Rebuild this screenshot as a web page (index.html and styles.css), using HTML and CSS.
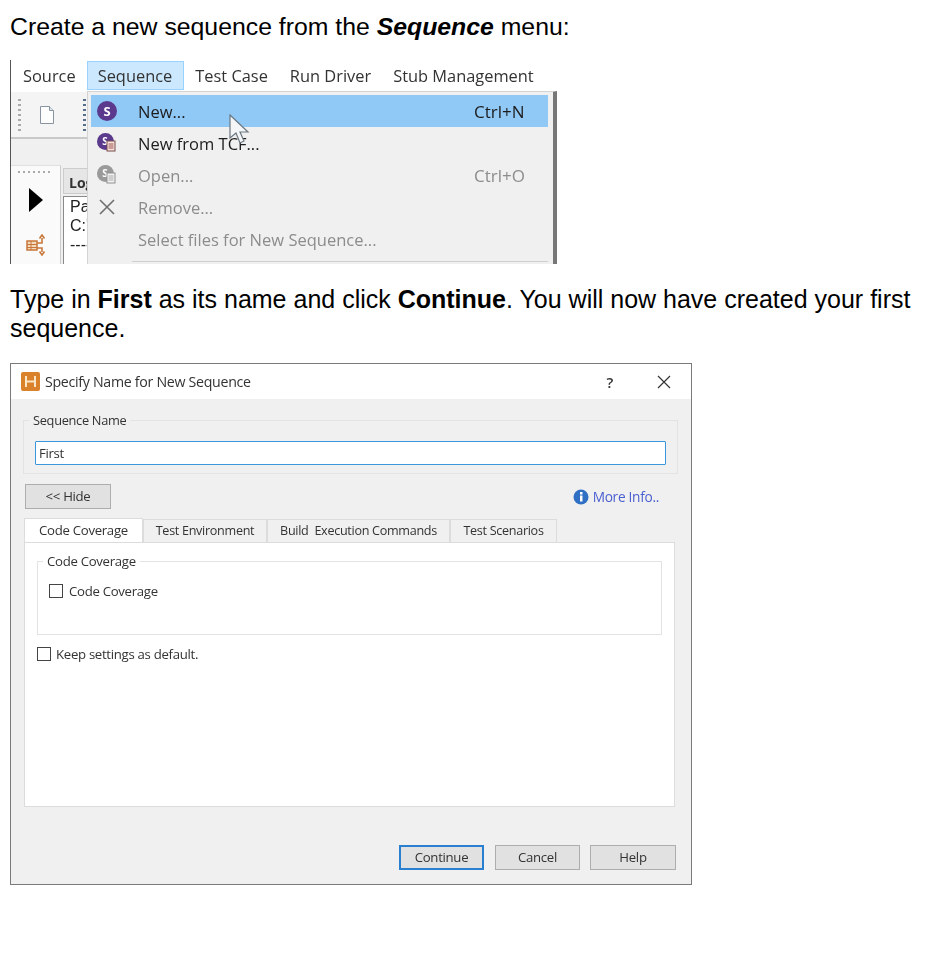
FILE: index.html
```html
<!DOCTYPE html>
<html lang="en">
  <head>
    <meta charset="UTF-8" />
    <meta name="viewport" content="width=device-width, initial-scale=1.0" />
    <title>Create a new sequence</title>
    <link rel="stylesheet" href="styles.css">
  </head>
  <body>
    <p class="step step-first">Create a new sequence from the <b><i>Sequence</i></b> menu:</p>

    <div class="app-shot">
      <div class="menubar">
        <span class="menubar-item">Source</span>
        <span class="menubar-item menubar-open">Sequence</span>
        <span class="menubar-item">Test Case</span>
        <span class="menubar-item">Run Driver</span>
        <span class="menubar-item">Stub Management</span>
      </div>
      <div class="toolbar">
        <span class="grip"></span>
        <svg class="doc-icon" width="16" height="20" viewBox="0 0 16 20">
          <path d="M1.5 1.5h9l4 4v13h-13z" fill="#fdfdfd" stroke="#8a94a0" />
          <path d="M10.5 1.5v4h4" fill="#dfe6ee" stroke="#8a94a0" />
        </svg>
        <span class="grip grip-2"></span>
      </div>
      <div class="toolbar-strip"></div>
      <div class="workspace">
        <div class="dock">
          <span class="dock-grip"></span>
          <svg class="play-icon" width="14" height="24" viewBox="0 0 14 24">
            <path d="M0 0l14 12L0 24z" fill="#000" />
          </svg>
          <svg class="flow-icon" width="20" height="22" viewBox="0 0 20 22">
            <rect x="1" y="7" width="10" height="9" fill="#f3d9bd" stroke="#c8773a" stroke-width="1.5" />
            <path d="M1 10.500h10M1 13.500h10M5 7v9" stroke="#c8773a" fill="none" />
            <path d="M11 9h5V4M13.500 4.500L16 1l2.500 3.500M11 14h5v4M13.500 17.500L16 21l2.500-3.500" fill="none" stroke="#c8773a" stroke-width="1.600" />
          </svg>
        </div>
        <div class="log-panel">
          <div class="log-tab">Log</div>
          <div class="log-text">Pa<br />C:'<br />----</div>
        </div>
      </div>

      <div class="menu">
        <div class="menu-row menu-row-active">
          <svg class="menu-icon" width="22" height="22" viewBox="0 0 22 22">
            <circle cx="11" cy="11" r="10" fill="#5b3a8e" />
            <text x="11" y="15.5" class="icon-letter">S</text>
          </svg>
          <span class="menu-label">New...</span>
          <span class="menu-key">Ctrl+N</span>
        </div>
        <div class="menu-row">
          <svg class="menu-icon" width="22" height="22" viewBox="0 0 22 22">
            <circle cx="9.5" cy="9.5" r="8.5" fill="#5b3a8e" />
            <text x="9" y="13" class="icon-letter icon-letter-sm">S</text>
            <rect x="11" y="9" width="8" height="10" fill="#f4e4dc" stroke="#7a4a4a" />
            <path d="M12.5 12h5M12.5 14h5M12.5 16h5" stroke="#a05050" />
          </svg>
          <span class="menu-label">New from TCF...</span>
        </div>
        <div class="menu-row menu-row-off">
          <svg class="menu-icon" width="22" height="22" viewBox="0 0 22 22">
            <circle cx="9.5" cy="9.5" r="8.5" fill="#9a9a9a" />
            <text x="9" y="13" class="icon-letter icon-letter-sm">S</text>
            <rect x="11" y="9" width="8" height="10" fill="#f2f2f2" stroke="#8f8f8f" />
            <path d="M12.5 12h5M12.5 14h5M12.5 16h5" stroke="#aaa" />
          </svg>
          <span class="menu-label">Open...</span>
          <span class="menu-key">Ctrl+O</span>
        </div>
        <div class="menu-row menu-row-off">
          <svg class="menu-icon" width="22" height="22" viewBox="0 0 22 22">
            <path d="M4 4l14 14M18 4L4 18" stroke="#6f6f6f" stroke-width="1.6" fill="none" />
          </svg>
          <span class="menu-label">Remove...</span>
        </div>
        <div class="menu-row menu-row-off">
          <span class="menu-icon"></span>
          <span class="menu-label">Select files for New Sequence...</span>
        </div>
        <div class="menu-sep"></div>
      </div>

      <svg class="cursor" width="22" height="32" viewBox="0 0 22 32">
        <path d="M1 1v23l6-5 4 10 4-2-4-9h8z" fill="#f4f6f8" stroke="#6b7780" stroke-width="1.2" />
      </svg>
    </div>

    <p class="step step-second">Type in <b>First</b> as its name and click <b>Continue</b>. You will now have created your first sequence.</p>

    <div class="dialog">
      <div class="titlebar">
        <svg class="title-icon" width="19" height="19" viewBox="0 0 19 19">
          <rect width="19" height="19" rx="2" fill="#d9822b" />
          <path d="M5 4v11M14 4v11M5 9.500h9" stroke="#fbe6c8" stroke-width="2" fill="none" />
        </svg>
        <span class="title-text">Specify Name for New Sequence</span>
        <span class="title-help">?</span>
        <svg class="title-close" width="14" height="14" viewBox="0 0 14 14">
          <path d="M1 1l12 12M13 1L1 13" stroke="#333" stroke-width="1.2" fill="none" />
        </svg>
      </div>

      <div class="dialog-body">
        <fieldset class="group name-group">
          <legend>Sequence Name</legend>
          <div class="name-input">First</div>
        </fieldset>

        <div class="hide-row">
          <span class="btn btn-hide">&lt;&lt; Hide</span>
          <span class="more-info">
            <svg width="16" height="16" viewBox="0 0 16 16">
              <circle cx="8" cy="8" r="7.500" fill="#2f6fc4" />
              <rect x="7" y="6.500" width="2.500" height="6" fill="#fff" />
              <rect x="7" y="3" width="2.500" height="2.500" fill="#fff" />
            </svg>
            More Info..
          </span>
        </div>

        <div class="tabs">
          <span class="tab tab-on">Code Coverage</span>
          <span class="tab tab-env">Test Environment</span>
          <span class="tab tab-build">Build&nbsp; Execution Commands</span>
          <span class="tab tab-scen">Test Scenarios</span>
        </div>
        <div class="tab-pane">
          <fieldset class="group coverage-group">
            <legend>Code Coverage</legend>
            <label class="check"><span class="box"></span>Code Coverage</label>
          </fieldset>
          <label class="check keep"><span class="box"></span>Keep settings as default.</label>
        </div>

        <div class="actions">
          <span class="btn btn-default">Continue</span>
          <span class="btn">Cancel</span>
          <span class="btn btn-help">Help</span>
        </div>
      </div>
    </div>
  </body>
</html>
```

FILE: styles.css
```css
body {
  margin: 0;
  padding: 0 10px;
  background: #fff;
  color: #000;
  font-family: "Liberation Sans", Arial, sans-serif;
}
.step {
  margin: 0;
  font-size: 24.8px;
  line-height: 29px;
}
.step-first {
  padding-top: 12px;
}
.step-second {
  margin-top: 21px;
  width: 915px;
  font-size: 25px;
}

/* app screenshot */
.app-shot {
  position: relative;
  margin-top: 19px;
  width: 547px;
  height: 204px;
  overflow: hidden;
  border-left: 1px solid #555;
  font-family: "Open Sans", sans-serif;
  font-size: 16.5px;
  color: #333;
  filter: blur(0.5px);
  box-sizing: border-box;
}
.menubar {
  display: flex;
  height: 32px;
  align-items: center;
  padding-left: 1px;
  font-size: 16.4px;
}
.menubar-item {
  padding: 0 10px;
  height: 29px;
  line-height: 28px;
  margin-top: -1px;
  border: 1px solid transparent;
  box-sizing: border-box;
  white-space: nowrap;
}
.menubar-open {
  background: #cce8ff;
  border-color: #99d1ff;
  padding-right: 11px;
}
.toolbar {
  display: flex;
  align-items: center;
  height: 47px;
  background: #f4f4f4;
  border-bottom: 2px solid #c9c9c9;
  box-sizing: border-box;
  padding-left: 7px;
}
.grip {
  width: 3px;
  height: 32px;
  background: repeating-linear-gradient(#aaa 0 2px, transparent 2px 5px);
}
.grip-2 {
  margin-left: 28px;
  background: repeating-linear-gradient(#56708c 0 2px, transparent 2px 5px);
}
.doc-icon {
  margin-left: 18px;
}
.toolbar-strip {
  height: 26px;
  background: #f0f0f0;
}
.workspace {
  display: flex;
  height: 100px;
  background: #f0f0f0;
}
.dock {
  width: 50px;
  background: #fafafa;
  border-right: 1px solid #ccc;
  border-top: 1px solid #e0e0e0;
  padding-left: 7px;
  box-sizing: border-box;
}
.dock-grip {
  display: block;
  margin-top: 5px;
  width: 34px;
  height: 2px;
  background: repeating-linear-gradient(90deg, #aaa 0 2px, transparent 2px 5px);
}
.play-icon {
  display: block;
  margin: 15px 0 0 11px;
}
.flow-icon {
  display: block;
  margin: 22px 0 0 8px;
}
.log-panel {
  margin-left: 2px;
  width: 30px;
  padding-top: 3px;
}
.log-tab {
  height: 26px;
  line-height: 28px;
  padding-left: 5px;
  background: #e6e6e6;
  font-weight: 700;
  font-size: 14px;
  border: 1px solid #ccc;
  box-sizing: border-box;
}
.log-text {
  height: 80px;
  margin-top: 2px;
  padding-left: 6px;
  background: #fff;
  border: 1px solid #8a8a8a;
  box-sizing: border-box;
  color: #222;
  font-family: "Liberation Sans", sans-serif;
  font-size: 16px;
  line-height: 19px;
  overflow: hidden;
}

/* open menu over the app */
.menu {
  position: absolute;
  left: 76px;
  top: 31px;
  width: 470px;
  height: 173px;
  padding: 3px 5px 0 3px;
  background: #f0f0f0;
  border: 1px solid #d4d4d4;
  border-right: 4px solid #777;
  border-bottom: 0;
  box-sizing: border-box;
}
.menu-row {
  display: flex;
  align-items: center;
  height: 32px;
  color: #1c1c1c;
}
.menu-row-active {
  background: #90c8f6;
}
.menu-row-off {
  color: #8c8c8c;
}
.menu-icon {
  display: block;
  width: 22px;
  margin-left: 5px;
  flex: none;
}
.menu-label {
  margin-left: 20px;
  flex: 1;
  white-space: nowrap;
}
.menu-key {
  width: 74px;
  flex: none;
  font-size: 17px;
}
.menu-sep {
  margin: 6px 0 0 41px;
  height: 1px;
  background: #cfcfcf;
}
.icon-letter {
  fill: #fff;
  font: 700 13px "Open Sans", sans-serif;
  text-anchor: middle;
}
.icon-letter-sm {
  font-size: 10px;
}
.cursor {
  position: absolute;
  left: 218px;
  top: 54px;
}

/* dialog */
.dialog {
  margin-top: 20px;
  width: 682px;
  height: 522px;
  display: flex;
  flex-direction: column;
  border: 1px solid #7a7a7a;
  box-sizing: border-box;
  font-family: "Open Sans", sans-serif;
  font-size: 13.2px;
  letter-spacing: -0.3px;
  color: #333;
  filter: blur(0.5px);
}
.titlebar {
  display: flex;
  align-items: center;
  height: 35px;
  padding-left: 10px;
  flex: none;
  background: #fff;
}
.title-text {
  margin-left: 5px;
  font-size: 14.2px;
  flex: 1;
}
.title-help {
  font-size: 15px;
  font-weight: 600;
  margin-right: 44px;
}
.title-close {
  margin-right: 20px;
}
.dialog-body {
  flex: 1;
  display: flex;
  flex-direction: column;
  background: #f0f0f0;
  padding: 20px 13px 14px 13px;
  min-height: 0;
}
.group {
  margin: 0;
  padding: 0;
  border: 1px solid #e3e3e3;
  min-width: 0;
}
.group legend {
  margin-left: -6px;
  padding: 0 4px;
  line-height: 16px;
}
.name-group {
  height: 60px;
  margin: -7px 0 0 -1px;
  box-sizing: content-box;
  padding: 0 11px;
}
.name-group legend {
  font-size: 12.8px;
}
.name-input {
  height: 24px;
  line-height: 22px;
  margin-top: 13px;
  padding-left: 3px;
  background: #fff;
  border: 1px solid #3c96dc;
  box-sizing: border-box;
  border-radius: 1px;
}
.hide-row {
  display: flex;
  justify-content: space-between;
  align-items: center;
  margin-top: 10px;
  padding: 0 19px 0 1px;
}
.btn {
  display: block;
  width: 85px;
  height: 25px;
  line-height: 23px;
  text-align: center;
  background: #e1e1e1;
  border: 1px solid #adadad;
  box-sizing: border-box;
}
.btn-hide {
  width: 86px;
}
.more-info {
  display: flex;
  align-items: center;
  gap: 4px;
  color: #4a5fcf;
  font-size: 13.7px;
}
.tabs {
  display: flex;
  margin-top: 9px;
  height: 24px;
  flex: none;
  font-size: 12.6px;
}
.tab {
  height: 23px;
  margin-top: 1px;
  line-height: 22px;
  text-align: center;
  background: #f0f0f0;
  border: 1px solid #dcdcdc;
  border-bottom: 0;
  box-sizing: border-box;
  white-space: nowrap;
}
.tab-on {
  width: 119px;
  height: 24px;
  margin-top: 0;
  background: #fff;
  font-size: 13.2px;
}
.tab-env {
  width: 124px;
}
.tab-build {
  width: 183px;
}
.tab-scen {
  width: 107px;
}
.tab-pane {
  height: 265px;
  width: 651px;
  flex: none;
  background: #fff;
  border: 1px solid #dcdcdc;
  box-sizing: border-box;
  padding: 10px 12px;
}
.coverage-group {
  height: 82px;
  margin-top: 0;
  box-sizing: border-box;
  padding: 0 11px;
}
.check {
  display: flex;
  align-items: center;
  gap: 6px;
}
.box {
  width: 14px;
  height: 14px;
  background: #fff;
  border: 1px solid #444;
  box-sizing: border-box;
}
.coverage-group .check {
  margin-top: 13px;
}
.keep {
  margin-top: 10px;
  gap: 5px;
}
.actions {
  display: flex;
  justify-content: flex-end;
  gap: 10px;
  margin-top: auto;
  padding-right: 2px;
}
.btn-default {
  border: 2px solid #2a7fd0;
  line-height: 21px;
  margin-right: 1px;
}
.btn-help {
  width: 86px;
}
```
